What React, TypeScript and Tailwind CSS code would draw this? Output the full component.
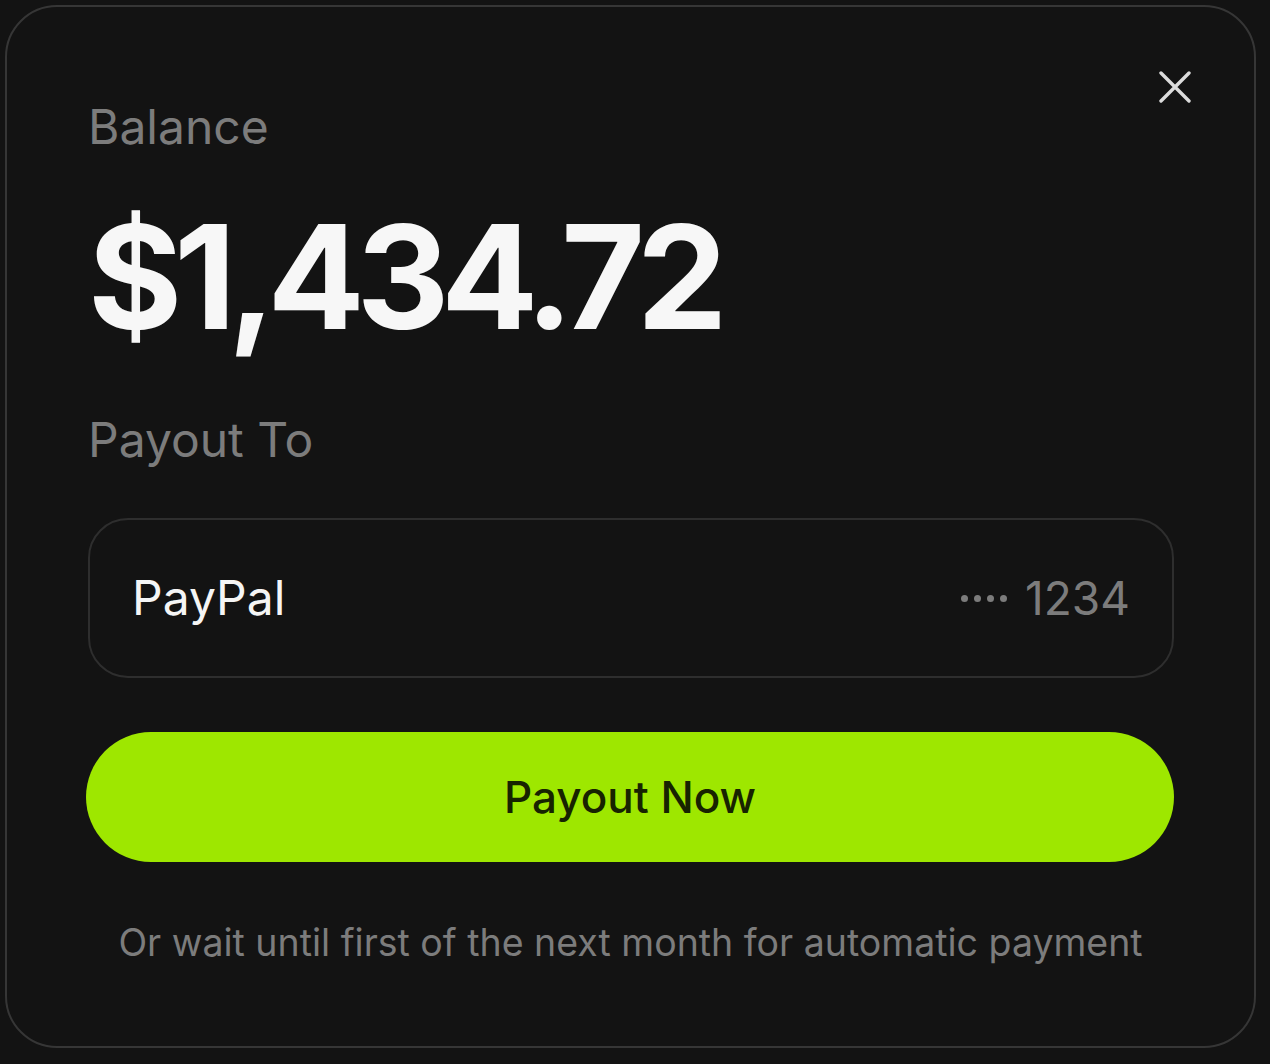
const font = { fontFamily: 'Inter, "Liberation Sans", sans-serif' };

export default function App() {
  return (
    <div className="min-h-screen w-full bg-[#131313] p-[5px]" style={font}>
      <div className="relative flex h-[1043px] w-[1251px] flex-col rounded-[52px] border-2 border-[#363636] bg-[#131313] px-[81px] pt-[96px]">
        <button className="absolute right-[63px] top-[64px] text-[#dcdcdc]">
          <svg width="32" height="32" viewBox="0 0 32 32" fill="none" stroke="currentColor" strokeWidth="3.4" strokeLinecap="round">
            <path d="M2 2 L30 30 M30 2 L2 30" />
          </svg>
        </button>

        <div className="text-[48px] leading-none text-[#7c7c7c]">Balance</div>
        <div className="mt-[54px] text-[144px] font-bold leading-none tracking-[-0.058em] text-[#f7f7f7]">
          $1,434.72
        </div>

        <div className="mt-[67px] text-[48px] leading-none text-[#7c7c7c]">Payout To</div>

        <div className="mt-[54px] flex h-[160px] w-[1086px] items-center justify-between rounded-[40px] border-2 border-[#2e2e2e] px-[42px]">
          <span className="text-[48px] text-[#f5f5f5]">PayPal</span>
          <span className="flex items-center gap-[18px] text-[46px] text-[#7c7c7c]">
            <span className="flex gap-[6px]">
              <span className="h-[7px] w-[7px] rounded-full bg-[#7c7c7c]" />
              <span className="h-[7px] w-[7px] rounded-full bg-[#7c7c7c]" />
              <span className="h-[7px] w-[7px] rounded-full bg-[#7c7c7c]" />
              <span className="h-[7px] w-[7px] rounded-full bg-[#7c7c7c]" />
            </span>
            1234
          </span>
        </div>

        <button className="mt-[54px] flex h-[130px] w-[1088px] -ml-[2px] items-center justify-center rounded-full bg-[#9ee700] text-[44px] font-medium text-[#172300]">
          Payout Now
        </button>

        <p className="mt-[62px] text-center text-[37.5px] leading-none text-[#7c7c7c]">
          Or wait until first of the next month for automatic payment
        </p>
      </div>
    </div>
  );
}
